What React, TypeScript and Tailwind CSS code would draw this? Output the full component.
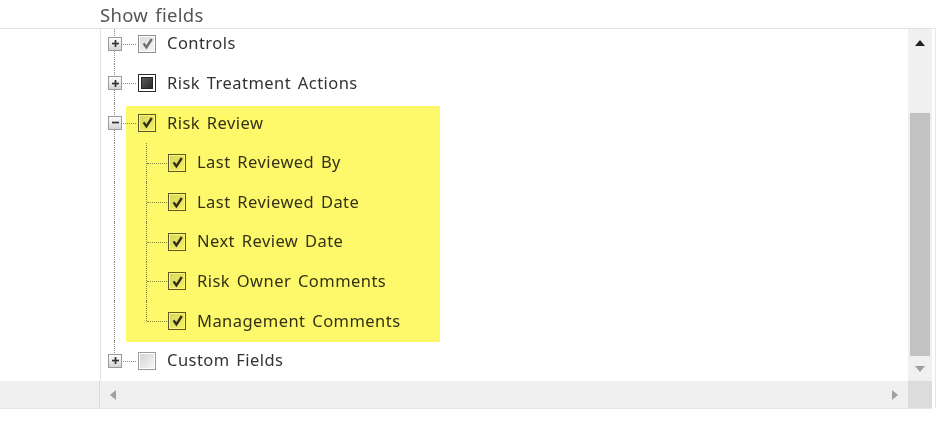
import React from "react";

const font = { fontFamily: '"Noto Sans", "Open Sans", Arial, sans-serif' };

function Expander({ open }: { open?: boolean }) {
  return (
    <div className="relative z-10 w-[14px] h-[14px] shrink-0 border border-[#9a9a9a] bg-gradient-to-b from-[#ffffff] to-[#d4d4d4] flex items-center justify-center">
      <svg width="9" height="9" viewBox="0 0 9 9">
        <rect x="1" y="3.7" width="7" height="1.7" fill="#333" />
        {!open && <rect x="3.65" y="1" width="1.7" height="7" fill="#333" />}
      </svg>
    </div>
  );
}

type CbState = "checked" | "checkedDark" | "indeterminate" | "unchecked";

function Checkbox({ state }: { state: CbState }) {
  if (state === "indeterminate") {
    return (
      <div className="w-[18px] h-[18px] shrink-0 border border-[#2a2a2a] bg-white p-[2px]">
        <div className="w-full h-full bg-gradient-to-br from-[#5a5a5a] to-[#2c2c2c] border border-[#222]" />
      </div>
    );
  }
  if (state === "unchecked") {
    return (
      <div className="w-[18px] h-[18px] shrink-0 border border-[#9a9a9a] bg-white p-[1px]">
        <div className="w-full h-full bg-gradient-to-br from-[#d4d4d4] to-[#f6f6f6]" />
      </div>
    );
  }
  const dark = state === "checkedDark";
  return (
    <div
      className={
        dark
          ? "w-[18px] h-[18px] shrink-0 border border-[#5a5a5a] bg-white p-[1px]"
          : "w-[18px] h-[18px] shrink-0 border border-[#8e8e8e] bg-white p-[1px]"
      }
    >
      <div className="w-full h-full bg-gradient-to-br from-[#dcdcdc] to-[#f6f6f6] flex items-center justify-center">
        <svg width="13" height="13" viewBox="0 0 13 13">
          <path
            d="M2.6 6.4 L5.4 10.4 L10.8 2"
            fill="none"
            stroke={dark ? "#303030" : "#6e6e6e"}
            strokeWidth="2.4"
            strokeLinejoin="miter"
          />
        </svg>
      </div>
    </div>
  );
}

const textCls = "ml-[11px] text-[16.5px] text-[#333] tracking-[0.45px] [word-spacing:2px] whitespace-nowrap";

function RootRow({
  label,
  open,
  cb,
  last,
}: {
  label: string;
  open?: boolean;
  cb: CbState;
  last?: boolean;
}) {
  return (
    <div className="flex items-center h-[39.6px]">
      <div className="relative w-[28px] h-full flex items-center pl-[7px] shrink-0">
        <div
          className={
            last
              ? "absolute left-[13px] top-0 h-1/2 border-l border-dotted border-[#8a8a8a]"
              : "absolute left-[13px] top-0 h-full border-l border-dotted border-[#8a8a8a]"
          }
        />
        <div className="absolute left-[20px] right-[-7px] top-1/2 border-t border-dotted border-[#8a8a8a]" />
        <Expander open={open} />
      </div>
      <div className="ml-[9px]">
        <Checkbox state={cb} />
      </div>
      <span className={textCls}>{label}</span>
    </div>
  );
}

function ChildRow({ label, last }: { label: string; last?: boolean }) {
  return (
    <div className="flex items-center h-[39.6px]">
      <div className="relative w-[28px] h-full shrink-0">
        <div className="absolute left-[13px] top-0 h-full border-l border-dotted border-[#8a8a8a]" />
      </div>
      <div className="relative w-[39px] h-full shrink-0">
        <div
          className={
            last
              ? "absolute left-[17px] top-0 h-1/2 border-l border-dotted border-[#8a8a8a]"
              : "absolute left-[17px] top-0 h-full border-l border-dotted border-[#8a8a8a]"
          }
        />
        <div className="absolute left-[18px] right-[1px] top-1/2 border-t border-dotted border-[#8a8a8a]" />
      </div>
      <div>
        <Checkbox state="checkedDark" />
      </div>
      <span className={textCls}>{label}</span>
    </div>
  );
}

export default function App() {
  return (
    <div className="relative w-[948px] h-[424px] bg-white overflow-hidden" style={font}>
      <div className="h-[28px] pl-[100px] pt-[3px] text-[18.5px] leading-[24px] text-[#555] tracking-[0.3px] [word-spacing:2px]">
        Show fields
      </div>
      <div className="flex h-[353px]">
        <div className="w-[100px] border-t border-[#e2e2e2]" />
        <div className="w-[808px] border-t border-l border-[#e2e2e2] overflow-hidden">
          <div className="-mt-[5px]">
            <RootRow label="Controls" cb="checked" />
            <RootRow label="Risk Treatment Actions" cb="indeterminate" />
            <RootRow label="Risk Review" cb="checkedDark" open />
            <ChildRow label="Last Reviewed By" />
            <ChildRow label="Last Reviewed Date" />
            <ChildRow label="Next Review Date" />
            <ChildRow label="Risk Owner Comments" />
            <ChildRow label="Management Comments" last />
            <RootRow label="Custom Fields" cb="unchecked" last />
          </div>
        </div>
        <div className="w-[24px] border-t border-[#e2e2e2] bg-[#f0f0f0] flex flex-col items-center">
          <div className="h-[28px] flex items-center justify-center">
            <svg width="10" height="6" viewBox="0 0 10 6">
              <path d="M0 6 L5 0 L10 6 Z" fill="#222" />
            </svg>
          </div>
          <div className="h-[56px]" />
          <div className="w-[20px] h-[243px] bg-[#c2c2c2]" />
          <div className="flex-1 flex items-center justify-center">
            <svg width="10" height="6" viewBox="0 0 10 6">
              <path d="M0 0 L10 0 L5 6 Z" fill="#a0a0a0" />
            </svg>
          </div>
        </div>
        <div className="w-[4px] border-t border-r border-[#e6e6e6]" />
      </div>
      <div className="flex h-[27px]">
        <div className="w-[100px] bg-[#f0f0f0] border-r border-[#dcdcdc]" />
        <div className="w-[808px] bg-[#f0f0f0] flex items-center justify-between px-[10px]">
          <svg width="6" height="10" viewBox="0 0 6 10">
            <path d="M6 0 L6 10 L0 5 Z" fill="#a0a0a0" />
          </svg>
          <svg width="6" height="10" viewBox="0 0 6 10">
            <path d="M0 0 L6 5 L0 10 Z" fill="#a0a0a0" />
          </svg>
        </div>
        <div className="w-[24px] bg-[#dcdcdc]" />
        <div className="w-[4px] border-r border-[#e6e6e6]" />
      </div>
      <div className="h-[1px] w-[932px] bg-[#e6e6e6]" />
      <div className="pointer-events-none absolute left-[126px] top-[106px] w-[314px] h-[236px] bg-[#fdf96a] mix-blend-multiply" />
    </div>
  );
}
